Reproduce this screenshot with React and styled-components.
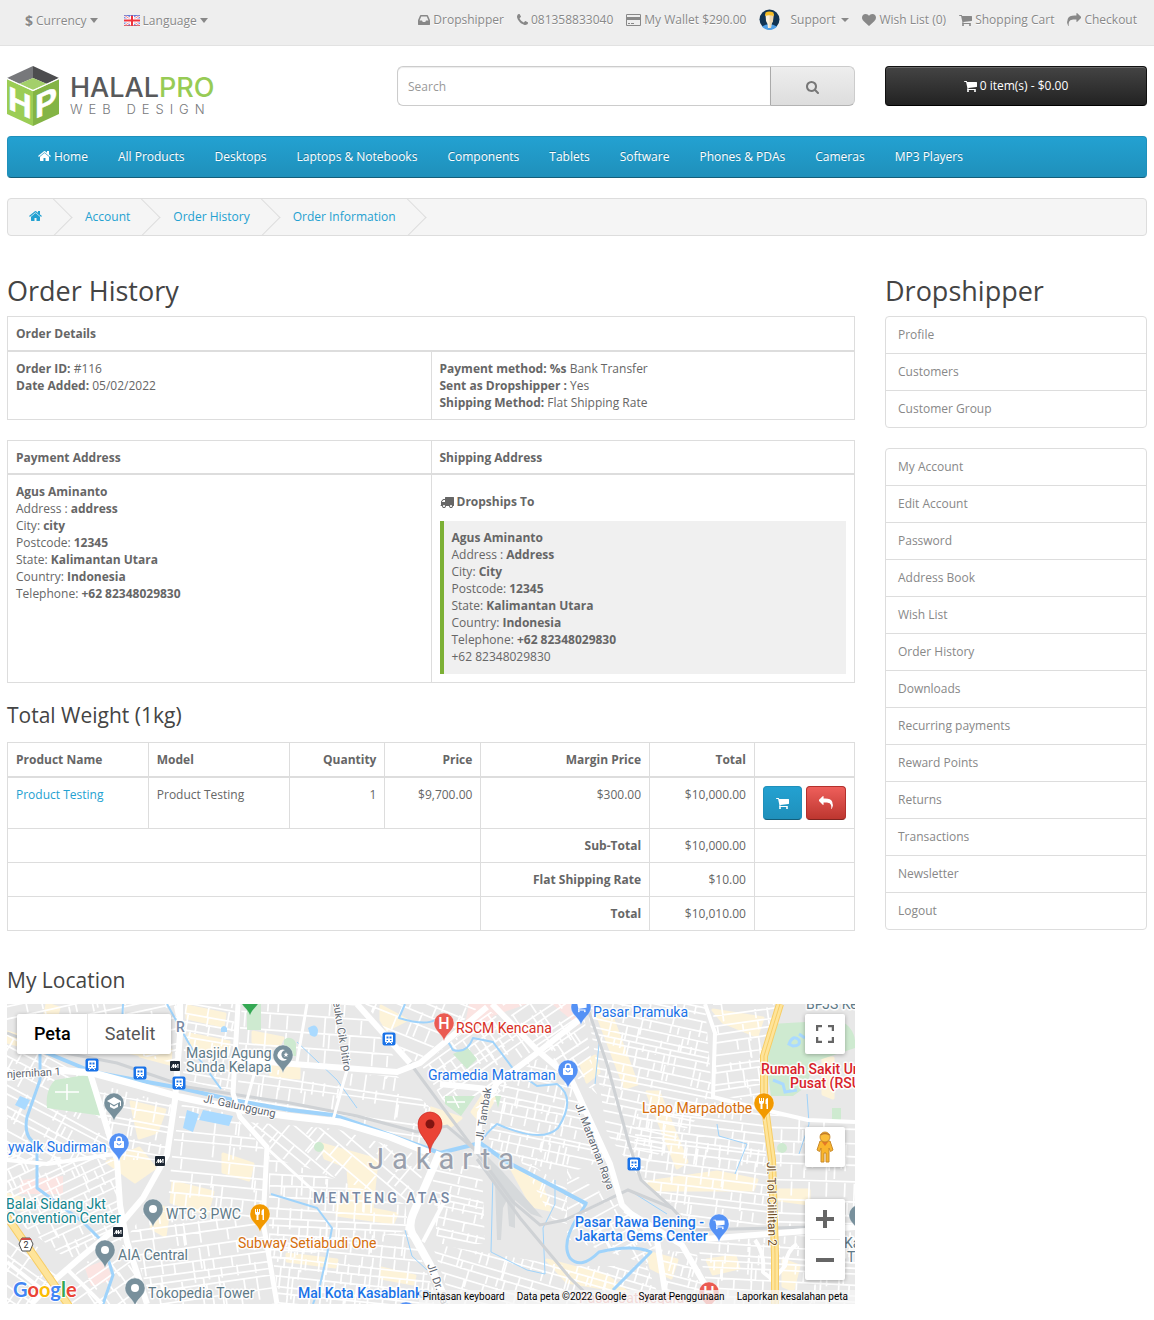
import styled, { createGlobalStyle, css } from "styled-components";

const GlobalStyle = createGlobalStyle`
  * {
    box-sizing: border-box;
  }
  body {
    margin: 0;
    background: #fff;
    color: #666;
    font-family: "Open Sans", sans-serif;
    font-size: 12px;
    line-height: 17px;
  }
  a {
    color: #23a1d1;
    text-decoration: none;
  }
  button, input {
    font-family: inherit;
    font-size: 12px;
  }
`;

/* ---------- icons ---------- */

const glyphs = {
  home: {
    box: "64 0 1664 1792",
    w: 13,
    d: "M1472 992v480q0 26-19 45t-45 19h-384v-384h-256v384h-384q-26 0-45-19t-19-45v-480q0-1 .5-3t.5-3l575-474 575 474q1 2 1 6zm223-69l-62 74q-8 9-21 11h-3q-13 0-21-7l-692-577-692 577q-12 8-24 7-13-2-21-11l-62-74q-8-10-7-23.5t11-21.5l719-599q32-26 76-26t76 26l244 204v-195q0-14 9-23t23-9h192q14 0 23 9t9 23v408l219 182q10 8 11 21.5t-7 23.5z",
  },
  search: {
    box: "64 0 1664 1792",
    w: 13,
    d: "M1216 832q0-185-131.5-316.5t-316.5-131.5-316.5 131.5-131.5 316.5 131.5 316.5 316.5 131.5 316.5-131.5 131.5-316.5zm512 832q0 52-38 90t-90 38q-54 0-90-38l-343-342q-179 124-399 124-143 0-273.5-55.5t-225-150-150-225-55.5-273.5 55.5-273.5 150-225 225-150 273.5-55.5 273.5 55.5 225 150 150 225 55.5 273.5q0 220-124 399l343 343q37 37 37 90z",
  },
  cart: {
    box: "64 0 1664 1792",
    w: 13,
    d: "M704 1536q0 52-38 90t-90 38-90-38-38-90 38-90 90-38 90 38 38 90zm896 0q0 52-38 90t-90 38-90-38-38-90 38-90 90-38 90 38 38 90zm128-1088v512q0 24-16.5 42.5t-40.5 21.5l-1044 122q13 60 13 70 0 16-24 64h920q26 0 45 19t19 45-19 45-45 19h-1024q-26 0-45-19t-19-45q0-11 8-31.5t16-36 21.5-40 15.5-29.5l-177-823h-204q-26 0-45-19t-19-45 19-45 45-19h256q16 0 28.5 6.5t19.5 15.5 13 24.5 8 26 5.5 29.5 4.5 26h1201q26 0 45 19t19 45z",
  },
  reply: {
    box: "0 0 1792 1792",
    w: 14,
    d: "M1792 1120q0 166-127 451-3 7-10.5 24t-13.5 30-13 22q-12 17-28 17-15 0-23.5-10t-8.5-25q0-9 2.5-26.5t2.5-23.5q5-68 5-123 0-112-19.5-200.5t-54-153.5-89-114.5-116-80-144-48-163-22.5-182-6.5h-224v256q0 26-19 45t-45 19-45-19l-512-512q-19-19-19-45t19-45l512-512q19-19 45-19t45 19 19 45v256h224q713 0 875 403 53 134 53 333z",
  },
  phone: {
    box: "192 0 1408 1792",
    w: 11,
    d: "M1600 1240q0 27-10 70.5t-21 68.5q-21 50-122 106-94 51-186 51-27 0-53-3.5t-57.5-12.5-47-14.5-55.5-20.5-49-18q-98-35-175-83-127-79-264-216t-216-264q-48-77-83-175-3-9-18-49t-20.5-55.5-14.5-47-12.5-57.5-3.5-53q0-92 51-186 56-101 106-122 25-11 68.5-21t70.5-10q14 0 21 3 18 6 53 76 11 19 30 54t35 63.5 31 53.5q3 4 17.5 25t21.5 35.5 7 28.5q0 20-28.5 50t-62 55-62 53-28.5 46q0 9 5 22.5t8.5 20.5 14 24 11.5 19q76 137 174 235t235 174q2 1 19 11.5t24 14 20.5 8.5 22.5 5q18 0 46-28.5t53-62 55-62 50-28.5q14 0 28.5 7t35.5 21.5 25 17.5q25 15 53.5 31t63.5 35 54 30q70 35 76 53 3 7 3 21z",
  },
  heart: {
    box: "0 0 1792 1792",
    w: 14,
    d: "M896 1664q-26 0-44-18l-624-602q-10-8-27.5-26t-55.5-65.5-68-97.5-53.5-121-23.5-138q0-220 127-344t351-124q62 0 126.5 21.5t120 58 95.5 68.5 76 68q36-36 76-68t95.5-68.5 120-58 126.5-21.5q224 0 351 124t127 344q0 221-229 450l-623 600q-18 18-44 18z",
  },
  inbox: {
    box: "128 0 1536 1792",
    w: 12,
    d: "M1151 960h316q-1-3-2.5-8t-2.5-8l-212-496h-708l-212 496q-1 2-2.5 8t-2.5 8h316l95 192h320zm513 30v482q0 26-19 45t-45 19h-1408q-26 0-45-19t-19-45v-482q0-62 25-123l238-552q10-25 36.5-42t52.5-17h832q26 0 52.5 17t36.5 42l238 552q25 61 25 123z",
  },
  truck: {
    box: "0 0 1792 1792",
    w: 14,
    d: "M640 1408q0-52-38-90t-90-38-90 38-38 90 38 90 90 38 90-38 38-90zm-384-512h384v-256h-158q-13 0-22 9l-195 195q-9 9-9 22v30zm1280 512q0-52-38-90t-90-38-90 38-38 90 38 90 90 38 90-38 38-90zm256-1088v1024q0 15-4 26.5t-13.5 18.5-16.5 11.5-23.5 6-22.5 2-25.5 0-22.5-.5q0 106-75 181t-181 75-181-75-75-181h-384q0 106-75 181t-181 75-181-75-75-181h-64q-3 0-22.5.5t-25.5 0-22.5-2-23.5-6-16.5-11.5-13.5-18.5-4-26.5q0-26 19-45t45-19v-320q0-8-.5-35t0-38 2.5-34.5 6.5-37 14-30.5 22.5-30l198-198q19-19 50.5-32t58.5-13h160v-192q0-26 19-45t45-19h1024q26 0 45 19t19 45z",
  },
  card: {
    box: "0 128 1920 1792",
    w: 15,
    d: "M1760 256q66 0 113 47t47 113v1216q0 66-47 113t-113 47h-1600q-66 0-113-47t-47-113v-1216q0-66 47-113t113-47h1600zm-1600 128q-13 0-22.5 9.5t-9.5 22.5v224h1664v-224q0-13-9.5-22.5t-22.5-9.5h-1600zm1600 1280q13 0 22.5-9.5t9.5-22.5v-608h-1664v608q0 13 9.5 22.5t22.5 9.5h1600zm-1504-128v-128h256v128h-256zm384 0v-128h384v128h-384z",
  },
};

const Glyph = styled.svg`
  flex: none;
  fill: currentColor;
  vertical-align: middle;
`;

const Icon = ({ name, flip }) => {
  const g = glyphs[name];
  return (
    <Glyph width={g.w} height="14" viewBox={g.box} aria-hidden="true">
      <path d={g.d} transform={flip ? "translate(1792 0) scale(-1 1)" : undefined} />
    </Glyph>
  );
};

/* ---------- top bar ---------- */

const TopBar = styled.nav`
  background: #eee;
  border-bottom: 1px solid #e2e2e2;
`;

const Wrapper = styled.div`
  max-width: 1170px;
  margin: 0 auto;
  padding: 0 7px;
`;

const TopInner = styled(Wrapper)`
  height: 45px;
  display: flex;
  justify-content: space-between;
  align-items: flex-start;
  color: #888;
  text-shadow: 0 1px 0 #fff;
`;

const TopLeft = styled.div`
  display: flex;
  gap: 26px;
  padding: 12px 18px 0;
`;

const TopRight = styled.div`
  display: flex;
  gap: 13px;
  padding: 11px 10px 0 0;
`;

const topItem = css`
  display: flex;
  align-items: center;
  gap: 3px;
  height: 17px;
  padding: 0;
  border: 0;
  background: none;
  color: #888;
  line-height: 17px;
  white-space: nowrap;
`;

const TopButton = styled.button`
  ${topItem}
  cursor: pointer;
  text-shadow: inherit;
`;

const TopLink = styled.a`
  ${topItem}
`;

const Dollar = styled.strong`
  font-size: 14px;
`;

const Caret = styled.span`
  border: 4px solid transparent;
  border-top: ${(props) => (props.$large ? 5 : 4)}px solid #888;
  border-bottom: 0;
  margin-left: ${(props) => (props.$large ? 0 : 3)}px;
`;

const Avatar = styled.svg`
  margin-right: 7px;
`;

const Flag = () => (
  <svg width="16" height="11" viewBox="0 0 16 11" aria-hidden="true">
    <rect width="16" height="11" fill="#7f90dc" />
    <path d="M0 0L16 11M16 0L0 11" stroke="#fff" strokeWidth="2.6" />
    <path d="M0 0L16 11M16 0L0 11" stroke="#f0626a" strokeWidth="0.8" />
    <path d="M8 0V11M0 5.5H16" stroke="#fff" strokeWidth="4" />
    <path d="M8 0V11M0 5.5H16" stroke="#f0323c" strokeWidth="2" />
    <path d="M0 0.500H16" stroke="#5c6fd0" strokeOpacity="0.7" />
    <path d="M0 10.500H16" stroke="#d9434c" strokeOpacity="0.7" />
  </svg>
);

/* ---------- header ---------- */

const Header = styled.header`
  display: grid;
  grid-template-columns: minmax(0, 360px) minmax(0, 1fr) 262px;
  gap: 30px;
  padding: 20px 0 10px;
  align-items: start;
`;

const LogoLink = styled.a`
  display: flex;
  align-items: center;
  height: 60px;
  gap: 11px;
`;

const LogoText = styled.span`
  display: flex;
  flex-direction: column;
`;

const LogoName = styled.span`
  font-family: Inter, sans-serif;
  font-size: 27px;
  line-height: 26px;
  font-weight: 500;
  color: #58595b;
`;

const LogoPro = styled.span`
  color: #97cb55;
`;

const LogoSub = styled.span`
  font-family: Inter, sans-serif;
  font-size: 13px;
  line-height: 16px;
  font-weight: 300;
  letter-spacing: 6px;
  color: #77787b;
`;

const SearchForm = styled.form`
  display: flex;
  height: 40px;
`;

const SearchInput = styled.input`
  flex: 1;
  min-width: 0;
  padding: 0 10px;
  border: 1px solid #ccc;
  border-radius: 6px 0 0 6px;
  border-right: 0;
  color: #555;
  box-shadow: inset 0 1px 1px rgba(0, 0, 0, 0.08);
  &::placeholder {
    color: #999;
  }
`;

const SearchButton = styled.button`
  width: 85px;
  border: 1px solid #ccc;
  border-left-color: #aaa;
  border-bottom-color: #b3b3b3;
  border-radius: 0 6px 6px 0;
  background: linear-gradient(#eee, #ddd);
  color: #777;
  cursor: pointer;
`;

const CartButton = styled.button`
  display: flex;
  align-items: center;
  justify-content: center;
  gap: 3px;
  height: 40px;
  padding-bottom: 2px;
  border: 1px solid #111;
  border-bottom-color: #000;
  border-radius: 4px;
  background: linear-gradient(#444, #222);
  box-shadow: inset 0 1px 0 rgba(255, 255, 255, 0.2);
  color: #fff;
  cursor: pointer;
`;

const Menu = styled.nav`
  display: flex;
  height: 42px;
  padding: 0 15px 2px;
  border: 1px solid #1f90bb;
  border-bottom-color: #145e7a;
  border-radius: 4px;
  background: linear-gradient(#23a1d1, #1f90bb);
`;

const MenuLink = styled.a`
  display: flex;
  align-items: center;
  gap: 3px;
  padding: 0 15px;
  color: #fff;
  text-shadow: 0 -1px 0 rgba(0, 0, 0, 0.25);
  white-space: nowrap;
`;

const Breadcrumb = styled.nav`
  display: flex;
  gap: 3px;
  height: 38px;
  margin-top: 20px;
  padding-left: 1px;
  border: 1px solid #ddd;
  border-radius: 4px;
  background: #f5f5f5;
  overflow: hidden;
`;

const Crumb = styled.a`
  position: relative;
  display: flex;
  align-items: center;
  padding: 0 20px 2px;
  &::after {
    content: "";
    position: absolute;
    top: 5px;
    right: -5px;
    width: 26px;
    height: 26px;
    border-top: 1px solid #ddd;
    border-right: 1px solid #ddd;
    transform: rotate(45deg);
  }
`;

const LogoMark = () => (
  <svg width="52" height="60" viewBox="0 0 52 60" aria-hidden="true">
    <polygon points="0,12 26,0 26,12 12,18" fill="#77787b" />
    <polygon points="52,12 26,0 26,12 40,18" fill="#4d4d4f" />
    <polygon points="12,18 26,12 40,18 26,24" fill="#a3cf6b" />
    <polygon points="0,13 26,25 26,60 0,48" fill="#9bcd55" />
    <polygon points="52,13 26,25 26,60 52,48" fill="#84b445" />
    <path d="M0 12.500L26 24.500L52 12.500" fill="none" stroke="#fff" strokeWidth="1.300" />
    <g
      fill="#fff"
      stroke="#fff"
      strokeWidth="0.500"
      fontFamily="Liberation Sans, sans-serif"
      fontWeight="700"
      fontSize="33"
      textAnchor="middle"
    >
      <text x="13" y="42" transform="skewY(24.800)">H</text>
      <text x="39" y="66" transform="skewY(-24.800)">P</text>
    </g>
  </svg>
);

/* ---------- content ---------- */

const Columns = styled.div`
  display: grid;
  grid-template-columns: minmax(0, 1fr) 262px;
  gap: 30px;
  padding: 37px 0 16px;
  align-items: start;
`;

const Title = styled.h1`
  margin: 0 0 7px;
  color: #444;
  font-size: 27px;
  line-height: 36px;
  font-weight: 400;
`;

const SubTitle = styled.h2`
  margin: ${(props) => (props.$spaced ? "37px 0 11px" : "0 0 14px")};
  color: #444;
  font-size: 21px;
  line-height: 25px;
  font-weight: 400;
`;

const Table = styled.table`
  width: 100%;
  margin-bottom: 20px;
  border-collapse: collapse;
`;

const Th = styled.th`
  height: 34px;
  padding: 8px 8px 7px;
  border: 1px solid #ddd;
  border-bottom-width: 2px;
  text-align: ${(props) => props.$align || "left"};
  font-weight: 700;
`;

const Td = styled.td`
  padding: 8px;
  border: 1px solid #ddd;
  text-align: ${(props) => props.$align || "left"};
  vertical-align: top;
`;

const ShipHeading = styled.h4`
  display: flex;
  align-items: center;
  gap: 3px;
  margin: 10px 0 11px;
  font-size: 12px;
  line-height: 17px;
`;

const ShipBox = styled.div`
  padding: 8px;
  padding-bottom: 9px;
  border-left: 4px solid #7cb035;
  background: #f0f0f0;
`;

const Actions = styled.div`
  display: flex;
  justify-content: flex-end;
  gap: 4px;
`;

const ActionButton = styled.button`
  height: 34px;
  padding: 0 12px 2px;
  border: 1px solid ${(props) => (props.$danger ? "#b3302c" : "#1f90bb")};
  border-bottom-color: ${(props) => (props.$danger ? "#802420" : "#145e7a")};
  border-radius: 4px;
  background: ${(props) =>
    props.$danger ? "linear-gradient(#ee5f5b, #bd362f)" : "linear-gradient(#23a1d1, #1f90bb)"};
  color: #fff;
  cursor: pointer;
`;

const ListGroup = styled.nav`
  margin-bottom: 20px;
  border: 1px solid #ddd;
  border-radius: 4px;
`;

const ListLink = styled.a`
  display: block;
  padding: 9px 12px;
  color: #888;
  line-height: 18px;
  & + & {
    border-top: 1px solid #ddd;
  }
`;

/* ---------- map ---------- */

const MapFrame = styled.section`
  position: relative;
  height: 300px;
  overflow: hidden;
  background: #e8e8e8;
  font-family: Roboto, sans-serif;
`;

const MapTypes = styled.div`
  position: absolute;
  top: 10px;
  left: 10px;
  display: flex;
  background: #fff;
  border-radius: 2px;
  box-shadow: 0 1px 4px rgba(0, 0, 0, 0.3);
`;

const MapType = styled.button`
  height: 40px;
  padding: 0 16px 0 17px;
  border: 0;
  background: none;
  font-size: 18px;
  font-weight: ${(props) => (props.$active ? 500 : 400)};
  color: ${(props) => (props.$active ? "#000" : "#565656")};
  & + & {
    border-left: 1px solid #e6e6e6;
  }
`;

const MapControl = styled.div`
  position: absolute;
  right: 10px;
  ${(props) => (props.$top ? `top: ${props.$top}px;` : "")}
  ${(props) => (props.$bottom ? `bottom: ${props.$bottom}px;` : "")}
  width: 40px;
  background: #fff;
  border-radius: 2px;
  box-shadow: 0 1px 4px rgba(0, 0, 0, 0.3);
`;

const MapButton = styled.button`
  display: flex;
  align-items: center;
  justify-content: center;
  width: 40px;
  height: 40px;
  padding: 0;
  border: 0;
  background: none;
  cursor: pointer;
`;

const ZoomRule = styled.div`
  height: 1px;
  margin: 0 5px;
  background: #e6e6e6;
`;

const Attribution = styled.div`
  position: absolute;
  right: 0;
  bottom: 0;
  display: flex;
  gap: 12px;
  padding: 0 7px 0 4px;
  background: rgba(245, 245, 245, 0.75);
  font-size: 10px;
  line-height: 14px;
  color: #000;
`;

const AttributionLink = styled.a`
  color: #000;
`;

const MapSvg = styled.svg`
  display: block;
  width: 100%;
  height: 300px;
  user-select: none;
`;

// Neighbourhoods: outline, street direction in degrees, block size
const districts = [
  { pts: "0,0 170,0 170,60 0,20", a: -12, u: 17, v: 10 },
  { pts: "0,30 84,75 108,156 0,156", a: 28, u: 15, v: 11 },
  { pts: "90,80 166,100 158,156 112,156", a: 10, u: 14, v: 10 },
  { pts: "0,150 110,156 118,235 60,255 0,210", a: -25, u: 15, v: 9 },
  { pts: "0,225 60,260 25,300 0,300", a: 35, u: 16, v: 12 },
  { pts: "75,260 118,240 140,300 50,300", a: -35, u: 18, v: 14 },
  { pts: "178,0 228,0 225,88 176,76", a: 10, u: 18, v: 10 },
  { pts: "235,0 350,0 395,64 270,57 230,60", a: 4, u: 19, v: 15 },
  { pts: "232,64 390,72 430,110 415,142 280,108 230,96", a: 8, u: 20, v: 13 },
  { pts: "175,100 226,110 258,146 256,215 160,210 166,140", a: 6, u: 18, v: 12 },
  { pts: "240,118 330,125 425,155 400,200 262,150", a: 40, u: 17, v: 13 },
  { pts: "262,152 398,200 402,226 262,260", a: 3, u: 13, v: 10 },
  { pts: "140,205 256,220 268,300 145,300 122,230", a: -8, u: 15, v: 11 },
  { pts: "264,240 404,228 432,300 272,300", a: 6, u: 13, v: 11 },
  { pts: "358,0 475,0 410,58 400,52", a: 22, u: 18, v: 13 },
  { pts: "415,62 482,6 532,50 475,105 438,100", a: -35, u: 14, v: 11 },
  { pts: "510,150 560,185 560,220 545,215", a: 20, u: 12, v: 9 },
  { pts: "425,165 475,160 478,240 430,240", a: 12, u: 12, v: 9 },
  { pts: "425,240 560,262 640,262 655,300 445,300", a: 16, u: 14, v: 9 },
  { pts: "495,0 575,0 590,90 565,70 530,45", a: -34, u: 14, v: 11 },
  { pts: "488,85 530,55 562,75 600,155 560,170 480,148", a: 12, u: 11, v: 9 },
  { pts: "580,0 698,0 706,100 630,170 600,130", a: 12, u: 15, v: 8 },
  { pts: "706,0 768,0 754,100 708,90", a: -8, u: 14, v: 9 },
  { pts: "630,110 706,98 756,108 764,220 690,226 625,165", a: 7, u: 13, v: 9 },
  { pts: "762,110 848,120 848,222 768,222", a: 2, u: 17, v: 14 },
  { pts: "560,165 618,205 650,240 640,260 560,235", a: -28, u: 15, v: 11 },
  { pts: "690,238 848,228 848,300 704,300", a: 3, u: 16, v: 10 },
  { pts: "650,245 690,250 700,300 664,300", a: 14, u: 13, v: 10 },
];

const streets = (d, seed) => {
  const nums = d.pts.split(" ").map((p) => p.split(",").map(Number));
  const cx = nums.reduce((s, p) => s + p[0], 0) / nums.length;
  const cy = nums.reduce((s, p) => s + p[1], 0) / nums.length;
  let n = seed * 7919 + 13;
  const rnd = () => {
    n = (n * 16807) % 2147483647;
    return n / 2147483647;
  };
  let path = "";
  for (let y = -120; y < 120; y += d.v * (0.7 + rnd() * 0.6)) {
    const bend = rnd() * 6 - 3;
    path += `M-130 ${y.toFixed(1)}Q0 ${(y + bend).toFixed(1)} 130 ${(y + bend).toFixed(1)}`;
    for (let x = -130; x < 130; x += d.u * (0.5 + rnd())) {
      if (rnd() > 0.25) path += `M${x.toFixed(1)} ${y.toFixed(1)}v${(d.v * (rnd() > 0.7 ? 2 : 1)).toFixed(1)}`;
    }
  }
  return { path, transform: `translate(${cx} ${cy}) rotate(${d.a})` };
};

const sand = [
  "M40 0l12 4-6 22-10-6z", "M92 30l60 14-3 10-58-12z", "M130 38l34 8-1 14-30-8z", "M180 2l38 8-2 12-36-8z",
  "M182 30l40 8-2 14-38-6z", "M124 98l34 8-8 22-18 6z", "M100 158l32-14 16 20-20 14z", "M166 178l40 10-6 22-36-12z",
  "M216 150l30 10-4 16-26-8z", "M150 200l12 6-4 26-14-8z", "M246 28l30 6-4 8-26-4z", "M374 2l26 14-20 10-6-10z",
  "M314 140l50 14-10 14-36-14z", "M340 150l30 6-6 58-20-5z", "M330 198l60 12-4 9-56-8z", "M424 104l30 10-10 8-24-6z",
  "M478 88l10 6-14 24-9-10z", "M503 162l30 14 10 30-18-4z", "M574 60l14-8 4 16-12 10z", "M590 10l14 0 26 70-12 4z",
  "M640 88l12 0 28 70-10 6z", "M706 6l50 8-6 18-34-14z", "M640 178l70-10 40 8-4 10-100 0z", "M640 248l30 8-6 18-20-10z",
  "M700 256l28-4 4 12-26 6z", "M540 256l60 16 20 16-60-10z", "M772 186l30 0 0 14-30-4z", "M776 256l16 6-6 24-10-4z",
  "M0 28l20 6 2 10-22-6z", "M816 54l10 0 0 40-10-4z", "M280 250l50 6-2 7-48-6z", "M374 264l34 8-2 8-32-6z",
  "M0 190l20 6-4 10-16-6z", "M262 60l30 2 0 12-28-2z",
];

const waterways = [
  { d: "M33 46L86 68 173 84 226 96 283 106 326 111 383 131 433 149 473 139 500 158 563 191 580 200", w: 4 },
  { d: "M33 46V76L20 113Q16 134 30 140L30 184 76 218 96 238 106 271 96 300", w: 3 },
  { d: "M116 0L114 44 130 48M160 0L185 45 214 85", w: 2 },
  { d: "M264 190L310 204 325 224 320 251 313 281 306 300", w: 2 },
  { d: "M398 0L392 14Q418 22 428 16L446 46Q460 50 466 34L486 38 507 66 530 82 550 80Q570 94 551 124 535 140 490 120 478 130 473 139", w: 2 },
  { d: "M558 189L579 200 570 214Q554 240 563 254 574 266 592 248 626 240 644 248L606 286", w: 3 },
  { d: "M290 38L330 76 350 104M486 170L484 248 520 266 538 270 536 224 548 200 548 176", w: 1 },
  { d: "M580 0L592 40 588 80M622 186L660 210M710 120L712 132 740 140 728 170M398 226L405 252 420 266", w: 1 },
  { d: "M800 90L802 120 792 150", w: 1 },
];

const rails = [
  "M0 29L43 46 110 59 180 83 283 99 350 112 410 128 440 122 466 144",
  "M403 59L440 109 473 153 506 198 533 221 558 216 621 186 665 204 685 226 848 222",
  "M470 155L513 214 563 274 590 300",
  "M582 8L600 60 622 140 634 176 665 204",
];

const roads = [
  { d: "M50 66L86 69 123 79 173 93 230 105 280 112 333 118 383 133 423 149", w: 7 },
  { d: "M0 74L50 66M83 69L110 156 113 201 120 238 140 300", w: 6 },
  { d: "M173 0L173 30 168 96 160 151 136 194 113 221 73 254 50 274 24 300", w: 6 },
  { d: "M231 0L226 89 233 113 260 143 256 218 270 300", w: 5 },
  { d: "M226 55L273 59 390 68 413 59 480 3", w: 6 },
  { d: "M350 0L403 59", w: 6 },
  { d: "M433 148L406 210Q400 224 408 234L423 261 440 300", w: 8 },
  { d: "M437 198L416 238", w: 4 },
  { d: "M485 0L530 46 564 75 603 160 615 201 650 236 660 300", w: 6 },
  { d: "M575 14L530 49 490 79 473 109 470 150M433 80L490 86", w: 6 },
  { d: "M618 206L675 241 701 286 706 300", w: 6 },
  { d: "M685 236L848 223", w: 6 },
  { d: "M698 0L708 29 706 93 758 106 801 116 848 118", w: 4 },
  { d: "M0 156L40 160 108 150M0 258L38 288M60 265L95 300", w: 4 },
  { d: "M300 0L290 58M250 60L236 110M340 66L326 116M262 146L310 190", w: 3 },
  { d: "M748 236Q758 250 756 268L766 276 778 262Q780 246 790 240", w: 4 },
];

const blue = "#1a73e8";
const slate = "#5f7a88";
const labels = [
  { x: 169, y: 28, t: "R", c: "#7889a3", b: 1 },
  { x: 179, y: 54, t: "Masjid Agung", c: slate },
  { x: 179, y: 68, t: "Sunda Kelapa", c: slate },
  { x: 449, y: 29, t: "RSCM Kencana", c: "#d93025" },
  { x: 586, y: 13, t: "Pasar Pramuka", c: blue },
  { x: 421, y: 76, t: "Gramedia Matraman", c: blue },
  { x: 754, y: 70, t: "Rumah Sakit Umum", c: "#d8232b", b: 1 },
  { x: 783, y: 84, t: "Pusat (RSUP)", c: "#d8232b", b: 1 },
  { x: 799, y: 5, t: "BPJS Kes", c: slate },
  { x: 635, y: 109, t: "Lapo Marpadotbe", c: "#d56e0c" },
  { x: 1, y: 148, t: "ywalk Sudirman", c: blue },
  { x: -1, y: 205, t: "Balai Sidang Jkt", c: "#12858d" },
  { x: -1, y: 219, t: "Convention Center", c: "#12858d" },
  { x: 159, y: 215, t: "WTC 3 PWC", c: slate },
  { x: 111, y: 256, t: "AIA Central", c: slate },
  { x: 141, y: 294, t: "Tokopedia Tower", c: slate },
  { x: 231, y: 244, t: "Subway Setiabudi One", c: "#d56e0c" },
  { x: 291, y: 294, t: "Mal Kota Kasablanka", c: blue, b: 1 },
  { x: 568, y: 223, t: "Pasar Rawa Bening -", c: blue, b: 1 },
  { x: 568, y: 237, t: "Jakarta Gems Center", c: blue, b: 1 },
  { x: 837, y: 244, t: "Ka", c: slate },
  { x: 840, y: 258, t: "Th", c: slate },
  { x: 572, y: 299, t: "Pasar Jatinegara", c: "#e5837c" },
];

const streetLabels = [
  { x: 0, y: 74, r: -3, t: "njernihan 1" },
  { x: 196, y: 98, r: 12, t: "Jl. Galunggung" },
  { x: 326, y: -2, r: 81, t: "euku Cik Ditiro" },
  { x: 476, y: 137, r: -81, t: "Jl. Tambak" },
  { x: 568, y: 101, r: 69, t: "Jl. Matraman Raya" },
  { x: 760, y: 158, r: 89, t: "Jl. Tol Cililitan 2", c: "#6d4b1c", s: 12 },
  { x: 420, y: 261, r: 70, t: "Jl. Dr. Satrio" },
];

const pins = [
  { x: 107, y: 99, c: "#78909c", k: "school" },
  { x: 112, y: 139, c: "#5491f5", k: "bag" },
  { x: 276, y: 51, c: "#78909c", k: "moon" },
  { x: 437, y: 19, c: "#ea5b52", k: "H" },
  { x: 561, y: 66, c: "#5491f5", k: "bag" },
  { x: 574, y: 3, c: "#5491f5", k: "cart" },
  { x: 757, y: 99, c: "#f29900", k: "food" },
  { x: 146, y: 205, c: "#78909c", k: "dot" },
  { x: 253, y: 210, c: "#f29900", k: "food" },
  { x: 98, y: 246, c: "#78909c", k: "dot" },
  { x: 128, y: 284, c: "#78909c", k: "dot" },
  { x: 712, y: 220, c: "#5491f5", k: "cart" },
  { x: 702, y: 288, c: "#ea5b52", k: "H" },
  { x: 852, y: 211, c: "#78909c", k: "dot" },
  { x: 243, y: -6, c: "#34a853", k: "dot" },
  { x: 399, y: 308, c: "#5491f5", k: "dot" },
];

const symbols = {
  dot: <circle r="4" fill="#fff" />,
  school: (
    <path d="M-7-2L0-6 7-2V3H6V-1L0 2ZM-4 1L0 3.500 4 1V4L0 6-4 4Z" fill="#fff" />
  ),
  bag: (
    <g>
      <rect x="-5" y="-2" width="10" height="7" rx="1" fill="#fff" />
      <path d="M-2.500-2V-3.500A2.500 2.500 0 0 1 2.500-3.500V-2" fill="none" stroke="#fff" strokeWidth="1.400" />
      <path d="M-2 0A2 2 0 0 0 2 0" fill="none" stroke="#5491f5" />
    </g>
  ),
  cart: <path d={glyphs.cart.d} transform="translate(-6 -6) scale(0.0067)" fill="#fff" />,
  moon: (
    <g fill="#fff">
      <path d="M2-5A5.500 5.500 0 1 0 4 4 4.500 4.500 0 1 1 2-5Z" />
      <path d="M3-3L3.700-1.200 5.500-1 4 0 4.500 2 3 1 1.300 2 2 0 .6-1 2.300-1.200Z" />
    </g>
  ),
  food: (
    <path d="M-5-5H-4V-2H-3V-5H-2V-2H-1V-5H0V-1Q0 1-1.500 1V6H-3.500V1Q-5 1-5-1ZM4-5V6H2.500V1H1.500V-3Q2-5 4-5Z" fill="#fff" />
  ),
  H: (
    <text y="6" textAnchor="middle" fontSize="16" fontWeight="500" fill="#fff">H</text>
  ),
};

const Pin = ({ x, y, c, k }) => (
  <g transform={`translate(${x} ${y})`}>
    <path
      d="M0 18C-2 10-10 8-10 0A10 10 0 1 1 10 0C10 8 2 10 0 18Z"
      fill={c}
      stroke="#fff"
      strokeOpacity="0.6"
      strokeWidth="0.6"
    />
    {symbols[k]}
  </g>
);

const stations = [[85, 61], [133, 69], [172, 79], [382, 35], [627, 160]];
const stops = [[168, 62], [153, 157], [111, 228]];

const MapCanvas = () => (
  <MapSvg viewBox="0 0 848 300" preserveAspectRatio="xMidYMid slice" role="img" aria-label="Jakarta">
    <defs>
      {districts.map((d, i) => (
        <clipPath id={`district${i}`} key={i}>
          <polygon points={d.pts} />
        </clipPath>
      ))}
    </defs>
    <rect width="848" height="300" fill="#e8e8e8" />
    <path d="M458 20Q470 40 486 12L520 0H462ZM545 0H572V22ZM14 176L56 172V190H12ZM78 264L98 256 106 276 84 282Z" fill="#fbe4e2" />
    {sand.map((d) => (
      <path d={d} key={d} fill="#fdf3d9" stroke="#fdf3d9" strokeWidth="3" strokeLinejoin="round" />
    ))}
    <g stroke="#fff" strokeWidth="1.700" fill="none">
      {districts.map((d, i) => {
        const s = streets(d, i + 1);
        return (
          <g clipPath={`url(#district${i})`} key={i}>
            <path d={s.path} transform={s.transform} />
          </g>
        );
      })}
    </g>
    <g fill="#ceead0">
      <path d="M48 76L84 70 96 112 40 104Q38 86 48 76Z" />
      <path d="M240 0h14v26h-14zM277 36a7 7 0 0 1 12 4v12h-12zM446 50l14-7 10 12-10 10zM438 92l30 0-14 20-16-12z" />
      <path d="M764 20L832 16Q850 24 848 44L806 58 800 82 786 92H764L758 50Z" />
      <path d="M825 104h9v14h-9zM770 144a5 5 0 1 1 10 0 5 5 0 1 1-10 0M307 143a5 5 0 1 1 10 0 5 5 0 1 1-10 0M488 92l6 0-3 12z" />
    </g>
    <path d="M48 88H72M60 80V96M446 92L452 104M440 98L458 98" stroke="#fff" strokeWidth="1.500" fill="none" />
    <g fill="#aadaff">
      <path d="M13 92l10 4-5 10-10-5zM196 106l30 6-4 10-30-6zM180 106l12 4-6 18-10-4zM301 24q8-6 10 2 0 10-8 5zM214 24q3-4 6 0v4h-6z" />
    </g>
    <path
      d="M782 40q4-10 10-4 2 6-6 6zM766 76l10 4 2 8 12-2M792 30l6 4"
      fill="none"
      stroke="#aadaff"
      strokeWidth="3"
    />
    <g fill="none" stroke="#9fd3fb" strokeLinejoin="round">
      {waterways.map((r) => (
        <path d={r.d} strokeWidth={r.w} key={r.d} />
      ))}
    </g>
    <path d="M478 150L496 168 536 214 524 210 508 196 508 224 502 222 500 196 496 204 494 236 490 236 488 180 476 158Z" fill="#d6d9db" />
    <g fill="none" stroke="#cfd2d5" strokeWidth="3">
      {rails.map((d) => (
        <path d={d} key={d} />
      ))}
    </g>
    <g fill="none" stroke="#fff" strokeLinejoin="round">
      {roads.map((r) => (
        <path d={r.d} strokeWidth={r.w} key={r.d} />
      ))}
    </g>
    <g fill="none" strokeLinejoin="round">
      <path d="M773 0L757 52V96L765 156 768 251V300M-2 210L62 302" stroke="#f7cd65" strokeWidth="8" />
      <path d="M773 0L757 52V96L765 156 768 251V300M-2 210L62 302" stroke="#fee49a" strokeWidth="6" />
      <path d="M773 0L757 52V96L765 156 768 251V300" stroke="#f7cd65" strokeWidth="1" />
    </g>
    {stations.map(([x, y]) => (
      <g transform={`translate(${x} ${y})`} key={x}>
        <rect x="-6.500" y="-6.500" width="13" height="13" rx="2" fill="#1a73e8" />
        <path d="M-3.500-4H3.500V3H-3.500ZM-3 5L-1 3M3 5L1 3" fill="#fff" stroke="#fff" />
        <path d="M-2.500-2.500H-.5V-.5H-2.500ZM.5-2.500H2.500V-.5H.5ZM-2.500 1H-1V2H-2.500ZM1 1H2.500V2H1Z" fill="#1a73e8" />
      </g>
    ))}
    {stops.map(([x, y]) => (
      <g transform={`translate(${x} ${y})`} key={x}>
        <rect x="-5" y="-5" width="10" height="10" rx="1" fill="#1d2733" />
        <path d="M-3.500 2L-1.500-2V2L.5-2V2L3-2V2" fill="none" stroke="#fff" />
      </g>
    ))}
    <path d="M15 234H23L26 240 23 247H15L12 240Z" fill="#fff" stroke="#555" />
    <path d="M15 234H23L25 236H13Z" fill="#d04b45" />
    <text x="19" y="244" fontSize="9" textAnchor="middle" fill="#333">2</text>
    <g paintOrder="stroke" stroke="#fff" strokeOpacity="0.9" strokeLinejoin="round">
      <g strokeWidth="2" fontSize="11">
        {streetLabels.map((l) => (
          <text key={l.t} transform={`translate(${l.x} ${l.y}) rotate(${l.r})`} fill={l.c || "#5f6771"} fontSize={l.s}>
            {l.t}
          </text>
        ))}
      </g>
      <g strokeWidth="3">
        <text x="361" y="165" fontSize="29" letterSpacing="8" fill="#9aa0ac" strokeOpacity="0.5">Jakarta</text>
        <text x="306" y="199" fontSize="14" fontWeight="500" letterSpacing="3" fill="#7889a3">MENTENG ATAS</text>
        {labels.map((l) => (
          <text key={l.t} x={l.x} y={l.y} fontSize="14" fontWeight={l.b ? 500 : 400} fill={l.c}>
            {l.t}
          </text>
        ))}
      </g>
    </g>
    {pins.map((p) => (
      <Pin {...p} key={`${p.x}-${p.y}`} />
    ))}
    <path d="M423 149C422 136 411 132 411 120A12 12 0 1 1 435 120C435 132 424 136 423 149Z" fill="#ea4335" stroke="#c5221f" strokeWidth="0.600" />
    <circle cx="423" cy="120" r="4.500" fill="#811411" />
    <text x="6" y="293" fontFamily="Lato, sans-serif" fontSize="20" fontWeight="700" paintOrder="stroke" stroke="#fff" strokeWidth="2">
      <tspan fill="#4285f4">G</tspan>
      <tspan fill="#ea4335">o</tspan>
      <tspan fill="#fbbc05">o</tspan>
      <tspan fill="#4285f4">g</tspan>
      <tspan fill="#34a853">l</tspan>
      <tspan fill="#ea4335">e</tspan>
    </text>
  </MapSvg>
);

const LocationMap = () => (
  <MapFrame>
    <MapCanvas />
    <MapTypes>
      <MapType $active>Peta</MapType>
      <MapType>Satelit</MapType>
    </MapTypes>
    <MapControl $top={10}>
      <MapButton aria-label="Fullscreen">
        <svg width="18" height="18" viewBox="0 0 18 18">
          <path d="M1 6V1H6M12 1H17V6M17 12V17H12M6 17H1V12" fill="none" stroke="#666" strokeWidth="2.500" />
        </svg>
      </MapButton>
    </MapControl>
    <MapControl $bottom={137}>
      <MapButton aria-label="Street View">
        <svg width="20" height="32" viewBox="0 0 20 32">
          <path d="M5 10H15L18 19 15.500 20.500 14 17V31H11V22H9V31H6V17L4.500 20.500 2 19Z" fill="#f9b52c" stroke="#c98a2b" />
          <path d="M7 11H13L10 15Z" fill="#e57827" />
          <circle cx="10" cy="6" r="5" fill="#fbbd3a" stroke="#bd7d26" strokeWidth="0.800" />
          <path d="M5.500 4Q10 1 14.500 4" fill="none" stroke="#c07a2a" strokeWidth="1.500" />
        </svg>
      </MapButton>
    </MapControl>
    <MapControl $bottom={24}>
      <MapButton aria-label="Zoom in">
        <svg width="18" height="18" viewBox="0 0 18 18">
          <path d="M9 0V18M0 9H18" stroke="#666" strokeWidth="4" />
        </svg>
      </MapButton>
      <ZoomRule />
      <MapButton aria-label="Zoom out">
        <svg width="18" height="18" viewBox="0 0 18 18">
          <path d="M0 9H18" stroke="#666" strokeWidth="4" />
        </svg>
      </MapButton>
    </MapControl>
    <Attribution>
      <AttributionLink href="#">Pintasan keyboard</AttributionLink>
      <span>Data peta ©2022 Google</span>
      <AttributionLink href="#">Syarat Penggunaan</AttributionLink>
      <AttributionLink href="#">Laporkan kesalahan peta</AttributionLink>
    </Attribution>
  </MapFrame>
);

/* ---------- data ---------- */

const menu = [
  "All Products",
  "Desktops",
  "Laptops & Notebooks",
  "Components",
  "Tablets",
  "Software",
  "Phones & PDAs",
  "Cameras",
  "MP3 Players",
];

const dropshipLinks = ["Profile", "Customers", "Customer Group"];

const accountLinks = [
  "My Account",
  "Edit Account",
  "Password",
  "Address Book",
  "Wish List",
  "Order History",
  "Downloads",
  "Recurring payments",
  "Reward Points",
  "Returns",
  "Transactions",
  "Newsletter",
  "Logout",
];

const totals = [
  ["Sub-Total", "$10,000.00"],
  ["Flat Shipping Rate", "$10.00"],
  ["Total", "$10,010.00"],
];

const columnWidths = [141, 141, 96, 96, 169, 105, 100];

const Address = ({ street, city }) => (
  <>
    <div><b>Agus Aminanto</b></div>
    <div>Address : <b>{street}</b></div>
    <div>City: <b>{city}</b></div>
    <div>Postcode: <b>12345</b></div>
    <div>State: <b>Kalimantan Utara</b></div>
    <div>Country: <b>Indonesia</b></div>
    <div>Telephone: <b>+62 82348029830</b></div>
  </>
);

const App = () => {
  return (
    <>
      <GlobalStyle />
      <TopBar>
        <TopInner>
          <TopLeft>
            <TopButton><Dollar>$</Dollar>Currency<Caret $large /></TopButton>
            <TopButton><Flag />Language<Caret $large /></TopButton>
          </TopLeft>
          <TopRight>
            <TopLink href="#"><Icon name="inbox" />Dropshipper</TopLink>
            <TopLink href="#"><Icon name="phone" />081358833040</TopLink>
            <TopLink href="#"><Icon name="card" />My Wallet $290.00</TopLink>
            <TopLink href="#">
              <Avatar width="21" height="21" viewBox="0 0 21 21" aria-hidden="true">
                <circle cx="10.500" cy="10.500" r="10" fill="#113453" />
                <path d="M3 17.500Q10 13 18 17.500A10 10 0 0 1 3 17.500Z" fill="#4f9fe6" />
                <path d="M6.500 5H14.500L14 12 12.500 15 12 19H9L8.500 15 7 12Z" fill="#fbf0dc" />
                <path d="M10.500 5H14.500L14 12 12.500 15 12 19H10.500Z" fill="#ecd7b4" />
                <path d="M6 7L6.500 3.500Q10 1.500 14.500 3.500L15 7Q10 5.500 6 7Z" fill="#f5bd25" />
              </Avatar>
              Support
              <Caret />
            </TopLink>
            <TopLink href="#"><Icon name="heart" />Wish List (0)</TopLink>
            <TopLink href="#"><Icon name="cart" />Shopping Cart</TopLink>
            <TopLink href="#"><Icon name="reply" flip />Checkout</TopLink>
          </TopRight>
        </TopInner>
      </TopBar>

      <Wrapper>
        <Header>
          <LogoLink href="#">
            <LogoMark />
            <LogoText>
              <LogoName>HALAL<LogoPro>PRO</LogoPro></LogoName>
              <LogoSub>WEB DESIGN</LogoSub>
            </LogoText>
          </LogoLink>
          <SearchForm>
            <SearchInput type="text" placeholder="Search" aria-label="Search" />
            <SearchButton type="button" aria-label="Search"><Icon name="search" /></SearchButton>
          </SearchForm>
          <CartButton><Icon name="cart" />0 item(s) - $0.00</CartButton>
        </Header>

        <Menu>
          <MenuLink href="#"><Icon name="home" />Home</MenuLink>
          {menu.map((item) => (
            <MenuLink href="#" key={item}>{item}</MenuLink>
          ))}
        </Menu>

        <Breadcrumb>
          <Crumb href="#" aria-label="Home"><Icon name="home" /></Crumb>
          <Crumb href="#">Account</Crumb>
          <Crumb href="#">Order History</Crumb>
          <Crumb href="#">Order Information</Crumb>
        </Breadcrumb>

        <Columns>
          <main>
            <Title>Order History</Title>
            <Table>
              <thead>
                <tr><Th colSpan={2}>Order Details</Th></tr>
              </thead>
              <tbody>
                <tr>
                  <Td width="50%">
                    <div><b>Order ID:</b> #116</div>
                    <div><b>Date Added:</b> 05/02/2022</div>
                  </Td>
                  <Td width="50%">
                    <div><b>Payment method: %s</b> Bank Transfer</div>
                    <div><b>Sent as Dropshipper :</b> Yes</div>
                    <div><b>Shipping Method:</b> Flat Shipping Rate</div>
                  </Td>
                </tr>
              </tbody>
            </Table>

            <Table>
              <thead>
                <tr>
                  <Th width="50%">Payment Address</Th>
                  <Th width="50%">Shipping Address</Th>
                </tr>
              </thead>
              <tbody>
                <tr>
                  <Td><Address street="address" city="city" /></Td>
                  <Td>
                    <ShipHeading><Icon name="truck" />Dropships To</ShipHeading>
                    <ShipBox>
                      <Address street="Address" city="City" />
                      <div>+62 82348029830</div>
                    </ShipBox>
                  </Td>
                </tr>
              </tbody>
            </Table>

            <SubTitle>Total Weight (1kg)</SubTitle>
            <Table>
              <colgroup>
                {columnWidths.map((w, i) => (
                  <col width={w} key={i} />
                ))}
              </colgroup>
              <thead>
                <tr>
                  <Th>Product Name</Th>
                  <Th>Model</Th>
                  <Th $align="right">Quantity</Th>
                  <Th $align="right">Price</Th>
                  <Th $align="right">Margin Price</Th>
                  <Th $align="right">Total</Th>
                  <Th />
                </tr>
              </thead>
              <tbody>
                <tr>
                  <Td><a href="#">Product Testing</a></Td>
                  <Td>Product Testing</Td>
                  <Td $align="right">1</Td>
                  <Td $align="right">$9,700.00</Td>
                  <Td $align="right">$300.00</Td>
                  <Td $align="right">$10,000.00</Td>
                  <Td>
                    <Actions>
                      <ActionButton aria-label="Reorder"><Icon name="cart" /></ActionButton>
                      <ActionButton $danger aria-label="Return"><Icon name="reply" /></ActionButton>
                    </Actions>
                  </Td>
                </tr>
                {totals.map(([label, value]) => (
                  <tr key={label}>
                    <Td colSpan={4} />
                    <Td $align="right"><b>{label}</b></Td>
                    <Td $align="right">{value}</Td>
                    <Td />
                  </tr>
                ))}
              </tbody>
            </Table>

            <SubTitle $spaced>My Location</SubTitle>
            <LocationMap />
          </main>

          <aside>
            <Title as="h2">Dropshipper</Title>
            <ListGroup>
              {dropshipLinks.map((item) => (
                <ListLink href="#" key={item}>{item}</ListLink>
              ))}
            </ListGroup>
            <ListGroup>
              {accountLinks.map((item) => (
                <ListLink href="#" key={item}>{item}</ListLink>
              ))}
            </ListGroup>
          </aside>
        </Columns>
      </Wrapper>
    </>
  );
};

export default App;
